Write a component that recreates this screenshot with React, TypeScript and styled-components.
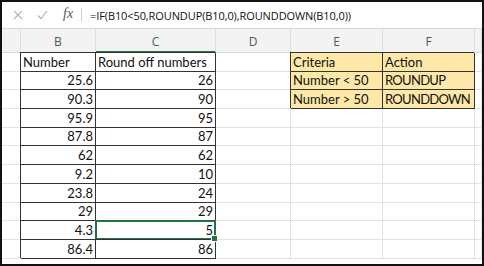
import styled, { createGlobalStyle } from "styled-components";

const GlobalStyle = createGlobalStyle`
  html, body {
    margin: 0;
    padding: 0;
    background: #ffffff;
  }
`;

type Row = [string, string, string, string];

const rows: Row[] = [
  ["Number", "Round off numbers", "Criteria", "Action"],
  ["25.6", "26", "Number < 50", "ROUNDUP"],
  ["90.3", "90", "Number > 50", "ROUNDDOWN"],
  ["95.9", "95", "", ""],
  ["87.8", "87", "", ""],
  ["62", "62", "", ""],
  ["9.2", "10", "", ""],
  ["23.8", "24", "", ""],
  ["29", "29", "", ""],
  ["4.3", "5", "", ""],
  ["86.4", "86", "", ""],
];

const columns = ["B", "C", "D", "E", "F"];

export default function App() {
  return (
    <>
      <GlobalStyle />
      <Frame>
        <FormulaBar>
          <BarIcon $left={11}>
            <svg width="10" height="10" viewBox="0 0 10 10">
              <path d="M1 1 L9 9 M9 1 L1 9" stroke="#b4b4b4" strokeWidth="1.2" fill="none" />
            </svg>
          </BarIcon>
          <BarIcon $left={35}>
            <svg width="11" height="10" viewBox="0 0 11 10">
              <path d="M1 5.5 L4 8.5 L10 1" stroke="#b4b4b4" strokeWidth="1.2" fill="none" />
            </svg>
          </BarIcon>
          <Fx>fx</Fx>
          <BarDivider />
          <Formula>=IF(B10&lt;50,ROUNDUP(B10,0),ROUNDDOWN(B10,0))</Formula>
        </FormulaBar>
        <Sheet>
          <HeadCell />
          {columns.map((c) => (
            <HeadCell key={c} $active={c === "C"}>
              {c}
            </HeadCell>
          ))}
          <HeadCell />
          {rows.map((r, i) => (
            <SheetRow key={i} row={r} index={i} />
          ))}
        </Sheet>
      </Frame>
    </>
  );
}

const SheetRow = ({ row, index }: { row: Row; index: number }) => {
  const isTitle = index === 0;
  const criteria = index < 3;
  return (
    <>
      <Cell />
      <Cell $boxed $align={isTitle ? "left" : "right"}>
        {row[0]}
      </Cell>
      <Cell $boxed $selected={index === 9} $align={isTitle ? "left" : "right"}>
        {row[1]}
        {index === 9 && <Handle />}
      </Cell>
      <Cell />
      <Cell $boxed={criteria} $fill={criteria}>
        {row[2]}
      </Cell>
      <Cell $boxed={criteria} $fill={criteria} $caps={!isTitle}>
        {row[3]}
      </Cell>
      <Cell />
    </>
  );
};

const Frame = styled.div`
  width: 484px;
  height: 266px;
  box-sizing: border-box;
  border: 2px solid #111;
  overflow: hidden;
  display: flex;
  flex-direction: column;
  background: #fff;
`;

const FormulaBar = styled.div`
  position: relative;
  height: 26px;
  flex: none;
  border-bottom: 1px solid #d9d9d9;
  display: flex;
  align-items: center;
`;

const BarIcon = styled.span<{ $left: number }>`
  position: absolute;
  left: ${(p) => p.$left}px;
  top: 8px;
  display: flex;
`;

const Fx = styled.span`
  position: absolute;
  left: 61px;
  top: 4px;
  font-family: "Liberation Serif", serif;
  font-style: italic;
  font-size: 14px;
  color: #555;
`;

const BarDivider = styled.span`
  position: absolute;
  left: 79px;
  top: 6px;
  width: 1px;
  height: 14px;
  background: #d0d0d0;
`;

const Formula = styled.span`
  margin-left: 88px;
  margin-top: 1px;
  font-family: "Open Sans", sans-serif;
  font-size: 11px;
  color: #111;
  letter-spacing: -0.1px;
`;

const Sheet = styled.div`
  display: grid;
  grid-template-columns: 19px 75px 120px 75px 92px 92px 1fr;
  grid-template-rows: 24px;
  grid-auto-rows: 18.7px;
  font-family: "Lato", sans-serif;
  font-size: 13px;
  color: #111;
`;

const HeadCell = styled.div<{ $active?: boolean }>`
  box-sizing: border-box;
  background: #f3f3f3;
  border-right: 1px solid #dcdcdc;
  border-bottom: ${(p) => (p.$active ? "2px solid #217346" : "1px solid #d6d6d6")};
  display: flex;
  align-items: center;
  justify-content: center;
  padding-top: 2px;
  font-family: "Open Sans", sans-serif;
  font-size: 12px;
  color: ${(p) => (p.$active ? "#217346" : "#555")};
`;

const Cell = styled.div<{
  $boxed?: boolean;
  $fill?: boolean;
  $selected?: boolean;
  $caps?: boolean;
  $align?: "left" | "right";
}>`
  position: relative;
  box-sizing: border-box;
  background: ${(p) => (p.$fill ? "#fde8a8" : "#fff")};
  border-right: 1px solid ${(p) => (p.$boxed ? "#333" : "#e2e2e2")};
  border-bottom: 1px solid ${(p) => (p.$boxed ? "#333" : "#e2e2e2")};
  box-shadow: ${(p) => (p.$boxed ? "-1px -1px 0 #333" : "none")};
  display: flex;
  align-items: flex-end;
  justify-content: ${(p) => (p.$align === "right" ? "flex-end" : "flex-start")};
  padding: 0 2px 1px 2px;
  line-height: 15px;
  white-space: nowrap;
  letter-spacing: ${(p) => (p.$caps ? "-0.7px" : "0")};

  ${(p) =>
    p.$selected &&
    `
    &::after {
      content: "";
      position: absolute;
      inset: -1px;
      border: 2px solid #217346;
      pointer-events: none;
    }
  `}
`;

const Handle = styled.span`
  position: absolute;
  right: -3px;
  bottom: -3px;
  width: 5px;
  height: 5px;
  background: #217346;
  border: 1px solid #fff;
  z-index: 2;
`;
